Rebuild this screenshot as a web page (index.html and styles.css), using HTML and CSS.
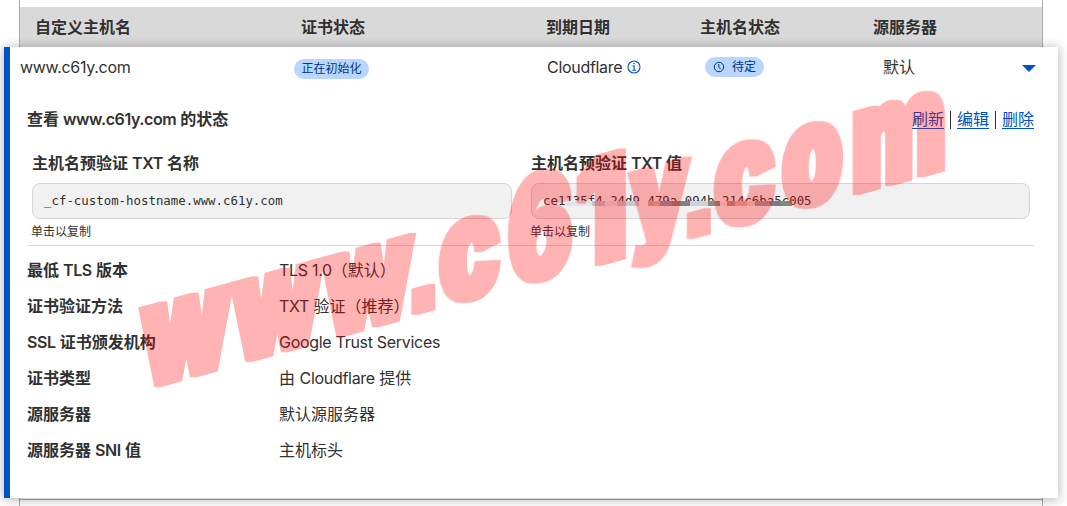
FILE: index.html
```html
<!DOCTYPE html>
<html lang="zh-CN">
<head>
    <meta charset="UTF-8">
    <meta name="viewport" content="width=device-width, initial-scale=1.0">
    <title>自定义主机名</title>
    <link rel="stylesheet" href="styles.css">
</head>
<body>
    <div class="table">
        <div class="table-head">
            <span>自定义主机名</span>
            <span>证书状态</span>
            <span>到期日期</span>
            <span>主机名状态</span>
            <span>源服务器</span>
        </div>

        <div class="card">
            <div class="summary">
                <span class="en">www.c61y.com</span>
                <span class="badge badge-init">正在初始化</span>
                <span class="expiry"><span class="en">Cloudflare</span>
                    <svg class="info-icon" viewBox="0 0 14 14">
                        <circle cx="7" cy="7" r="6"/>
                        <path d="M5.4 6h1.7v4M5.2 10.2h3.8M6.3 3.6h1.4"/>
                    </svg>
                </span>
                <span class="badge badge-pending">
                    <svg class="clock-icon" viewBox="0 0 12 12">
                        <circle cx="6" cy="6" r="4.7"/>
                        <path d="M5.8 3v3.2l1.8 1.8"/>
                    </svg>
                    待定
                </span>
                <span class="origin">默认</span>
                <span class="arrow"></span>
            </div>

            <div class="details">
                <div class="title-row">
                    <h2>查看 <span class="en">www.c61y.com</span> 的状态</h2>
                    <div class="links">
                        <a href="#">刷新</a><a href="#">编辑</a><a href="#">删除</a>
                    </div>
                </div>

                <div class="fields">
                    <div class="field">
                        <h3>主机名预验证 <span class="en">TXT</span> 名称</h3>
                        <div class="code">_cf-custom-hostname.www.c61y.com</div>
                        <small>单击以复制</small>
                    </div>
                    <div class="field">
                        <h3>主机名预验证 <span class="en">TXT</span> 值</h3>
                        <div class="code"><span class="token">ce1135f4-24d9-479a-094b-214c6ba5c005<i class="mosaic"></i></span></div>
                        <small>单击以复制</small>
                    </div>
                </div>

                <dl class="props">
                    <dt>最低 <span class="en">TLS</span> 版本</dt><dd><span class="en">TLS 1.0</span>（默认）</dd>
                    <dt>证书验证方法</dt><dd><span class="en">TXT</span> 验证（推荐）</dd>
                    <dt><span class="en">SSL</span> 证书颁发机构</dt><dd><span class="en">Google Trust Services</span></dd>
                    <dt>证书类型</dt><dd>由 <span class="en">Cloudflare</span> 提供</dd>
                    <dt>源服务器</dt><dd>默认源服务器</dd>
                    <dt>源服务器 <span class="en">SNI</span> 值</dt><dd>主机标头</dd>
                </dl>
            </div>
        </div>

        <div class="next-row"></div>
    </div>

    <!-- slanted watermark, each letter squeezed to its own width and thickened sideways -->
    <svg class="watermark" viewBox="0 0 1067 506">
        <filter id="fat" filterUnits="userSpaceOnUse" x="0" y="0" width="1067" height="506">
            <feMorphology operator="dilate" radius="3 0"/>
        </filter>
        <g filter="url(#fat)">
            <g transform="matrix(1 -0.275 0 1 0 428.5)">
                <text transform="translate(143 0) scale(.67 1)">w</text>
                <text transform="translate(234 0) scale(.67 1)">w</text>
                <text transform="translate(325 0) scale(.67 1)">w</text>
                <text class="dot" transform="translate(413.5 -5) scale(.56 .8)">.</text>
                <text transform="translate(440 0) scale(.67 1)">c</text>
                <text transform="translate(509 0) scale(.63 1)">6</text>
                <text transform="translate(576 0) scale(.76 1)">1</text>
                <text transform="translate(631 -12) scale(.61 .86)">y</text>
                <text class="dot" transform="translate(689 -5) scale(.56 .8)">.</text>
                <text transform="translate(715 0) scale(.67 1)">c</text>
                <text transform="translate(783 0) scale(.64 1)">o</text>
                <text transform="translate(852 0) scale(.675 1)">m</text>
            </g>
        </g>
    </svg>
</body>
</html>
```
FILE: styles.css
```css
* {
    box-sizing: border-box;
}
body {
    margin: 0;
    height: 506px;
    overflow: hidden;
    position: relative;
    background: #fff;
    color: #313131;
    font: 16px/24px Inter, "Noto Sans CJK SC", sans-serif;
}
h2, h3, dl, dd {
    margin: 0;
    font-size: 16px;
}
h2, h3, dt, .table-head {
    font-weight: 600;
}
.en {
    letter-spacing: -.3px;
}
h2 .en, h3 .en, dt .en {
    letter-spacing: -.4px;
}
.table {
    width: 1024px;
    height: 506px;
    margin-left: 19px;
    padding-top: 7px;
    border: solid #a9a9a9;
    border-width: 0 1px;
}
.table-head {
    display: grid;
    grid-template-columns: 266px 245px 154px 173px 1fr;
    height: 40px;
    padding: 8px 0 0 15px;
    background: #d9d9d9;
}
.card {
    position: relative;
    width: 1054px;
    height: 451px;
    margin-left: -16px;
    border-left: 6px solid #0051c3;
    background: #fff;
    box-shadow: 0 1px 10px 1px rgba(0, 0, 0, .27);
}
.summary {
    display: grid;
    grid-template-columns: 274px 253px 158px 178px 139px 1fr;
    padding: 8px 0 0 10px;
    height: 48px;
    align-items: start;
}
.badge {
    display: flex;
    align-items: center;
    justify-content: center;
    height: 20px;
    border-radius: 10px;
    background: #b9d6ff;
    color: #003681;
    font-size: 12px;
    line-height: 20px;
}
.badge-init {
    width: 75px;
    margin-top: 4px;
}
.badge-pending {
    width: 59px;
    margin-top: 2px;
    gap: 7px;
}
.expiry {
    display: flex;
    align-items: center;
    gap: 5px;
}
.info-icon {
    width: 14px;
    height: 14px;
    fill: none;
    stroke: #0051c3;
    stroke-width: 1.1;
}
.clock-icon {
    width: 12px;
    height: 12px;
    fill: none;
    stroke: #003681;
}
.arrow {
    margin-top: 10px;
    width: 0;
    border: 7px solid transparent;
    border-top-color: #0051c3;
    border-bottom: 0;
}
.details {
    padding: 12px 24px 0 17px;
}
.title-row {
    display: flex;
    justify-content: space-between;
}
.links {
    display: flex;
    padding-top: 4px;
}
.links a {
    color: #0051c3;
    height: 18px;
    line-height: 17px;
    text-decoration: none;
    border-bottom: 1px solid #0051c3;
}
.links a + a {
    margin-left: 13px;
}
.links a + a::before {
    content: "";
    float: left;
    width: 1px;
    height: 18px;
    margin-left: -7px;
    background: #313131;
}
.fields {
    display: flex;
    gap: 19px;
    height: 115px;
    margin-left: 1px;
    padding: 20px 0 0 4px;
    border-bottom: 1px solid #d9d9d9;
}
.field {
    width: 480px;
}
.field + .field {
    width: 499px;
}
.code {
    height: 36px;
    margin-top: 8px;
    padding-left: 11px;
    border: 1px solid #d5d5d5;
    border-radius: 8px;
    background: #f1f1f1;
    font: 12.4px/34px "DejaVu Sans Mono", "Liberation Mono", monospace;
}
.field small {
    display: block;
    margin-left: -1px;
    font-size: 12px;
    line-height: 26px;
}
.token {
    position: relative;
    display: inline-block;
}
/* pixelated strip over the secret part of the value */
.mosaic {
    position: absolute;
    left: 24px;
    top: 17px;
    width: 225px;
    height: 6px;
    background: linear-gradient(90deg, #dfe6ea 0 25px, #c4c4cc 25px 38px, #e0e6ea 38px 50px, #c6c6cd 50px 72px, #f1f1f1 72px 81px, #c9aaa2 81px 87px, #dcb89f 87px 93px, #8996b0 93px 105px, #858080 105px 123px, #ccd3dc 123px 141px, #888d86 141px 153px, #f1e2dd 153px 160px, #c08f7e 160px 168px, #e5b3a0 168px 180px, #d8dad5 180px 188px, #a09ca5 188px 203px, #787c88 203px 214px, #8b8780 214px 225px) 0 0 / 100% 5px no-repeat #f1f1f1;
}
.props {
    display: grid;
    grid-template-columns: 252px 1fr;
    grid-auto-rows: 36px;
    padding-top: 12px;
}
.next-row {
    height: 7px;
    margin-top: 1px;
    border-top: 1px solid #a9a9a9;
}
.watermark {
    position: absolute;
    inset: 0;
    width: 1067px;
    height: 506px;
    opacity: .3;
    pointer-events: none;
    fill: #f00;
    stroke: #f00;
    stroke-width: 4;
    stroke-miterlimit: 2;
    font: 900 147px Inter, sans-serif;
}
.watermark .dot {
    stroke-width: 14;
    font: 900 128px "Liberation Sans", sans-serif;
}
```
